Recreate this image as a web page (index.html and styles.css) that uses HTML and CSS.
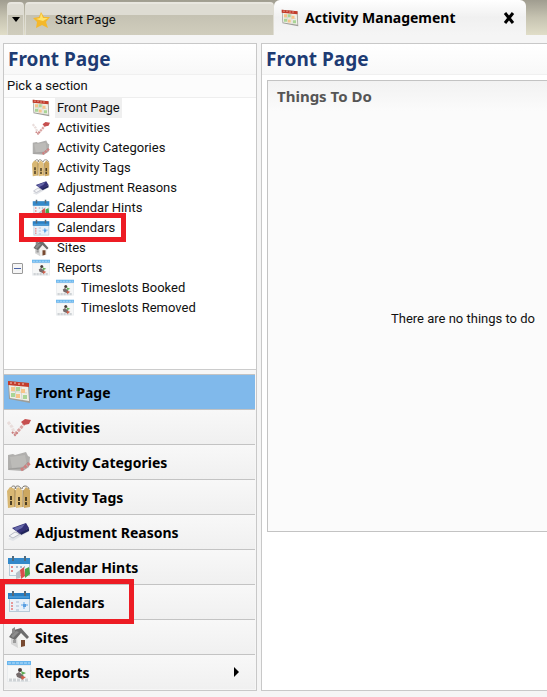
FILE: index.html
```html
<!DOCTYPE html>
<html lang="en">
<head>
    <meta charset="UTF-8">
    <meta name="viewport" content="width=device-width, initial-scale=1.0">
    <title>Activity Management</title>
    <link rel="stylesheet" href="styles.css">
</head>
<body>
    <!-- shared icons, used by the tree and the side menu -->
    <svg class="sprite" aria-hidden="true">
        <symbol id="front" viewBox="0 0 24 24">
            <path d="M1 1l21 2 1 20L2 19z" fill="#9d9d98"/>
            <path d="M2 5l19 1 1 15L3 18z" fill="#f0efe6"/>
            <path d="M1 1l21 2v4L1 5z" fill="#c33c2c"/>
            <path d="M4 2v2m4-2v2m4-1v2m4-2v2" stroke="#f2c9bd"/>
            <path d="M4 11l16 2M8 6l1 12m5-11l1 13" stroke="#d5d6d0"/>
            <path d="M4 7h4v4H4zm10 2h4v4h-4zm-5 5h4v4H9z" fill="#f7c489"/>
            <path d="M9 7h4v4H9zm-5 6h4v4H4zm12 2h4v4h-4z" fill="#a9d596"/>
        </symbol>
        <symbol id="activities" viewBox="0 0 24 24">
            <path d="M1 7l4 5 2 5" fill="none" stroke="#e9dddb" stroke-width="3" stroke-dasharray="3 1"/>
            <path d="M8 19l5-5 4-5" fill="none" stroke="#dba5a3" stroke-width="3" stroke-dasharray="3 1"/>
            <path d="M14 7l4-3 6 1-2 4-5 1z" fill="#c64f4f"/>
            <path d="M5 17l3 3 3-3" fill="none" stroke="#c98080" stroke-width="2" stroke-dasharray="2 1"/>
        </symbol>
        <symbol id="categories" viewBox="0 0 24 24">
            <path d="M1 5l5-1 2 1 11-3 2 4 2 1-1 10-6 4-15-1z" fill="#b0afad"/>
            <path d="M3 7l15-2 2 11-15 2z" fill="#bcbbb8"/>
            <path d="M2 19l14-1 5-6" fill="none" stroke="#9c9b99"/>
            <path d="M14 20l4-3 5-4" fill="none" stroke="#cf8080" stroke-width="3" stroke-dasharray="3 1"/>
        </symbol>
        <symbol id="tags" viewBox="0 0 24 24">
            <path d="M4 4c0-4 5-4 5 0m-1 0c0-4 5-4 6 0m1 0c0-4 6-4 7 0" fill="none" stroke="#777166"/>
            <path d="M0 6l3-4 5 2v18l-7 1z" fill="#d8b773"/>
            <path d="M8 6l3-4 4 3 1 17-7 1z" fill="#e1bf7b"/>
            <path d="M16 6l3-4 4 3v17l-6 1z" fill="#cda760"/>
            <path d="M8 5v17m8-17v17" stroke="#a08350"/>
            <path d="M4 11v9m8-8v8m7-8v8" stroke="#4b3e25" stroke-width="2" stroke-dasharray="4 1"/>
        </symbol>
        <symbol id="adjust" viewBox="0 0 24 24">
            <path d="M1 19l5 2 17-10-1-4z" fill="#e2e4e8"/>
            <path d="M2 16l6-4 5 2-7 4z" fill="#f4f4f6" stroke="#b9bcc6"/>
            <path d="M5 8l14-5 3 5-9 6z" fill="#343177"/>
            <path d="M7 8l11-4-3 4-6 3z" fill="#6668a9"/>
            <path d="M13 13l9-5v3l-8 4z" fill="#20245a"/>
        </symbol>
        <symbol id="calendar" viewBox="0 0 24 24">
            <path d="M2 3h21v19H2z" fill="#b8cbd8"/>
            <path d="M3 9h19v12H3z" fill="#e9f1f8"/>
            <path d="M1 3h22v6H1z" fill="#287fc4"/>
            <path d="M2 7h20" stroke="#62b0e7"/>
            <path d="M6 1v5m12-5v5" stroke="#576977" stroke-width="2"/>
            <path d="M5 12v8" stroke="#e79a9a" stroke-width="2" stroke-dasharray="2 1"/>
            <path d="M9 12h3m-3 4h3m-3 4h3" stroke="#c9d4e3" stroke-width="2"/>
            <path d="M17 12v7m-3-4h7" stroke="#a5cdf2" stroke-width="2"/>
            <path d="M16 14h3v3h-3z" fill="#5a9fe0"/>
        </symbol>
        <symbol id="hints" viewBox="0 0 24 24">
            <path d="M2 3h21v18H2z" fill="#b8cbd8"/>
            <path d="M3 9h19v11H3z" fill="#f0f5f8"/>
            <path d="M1 3h22v6H1z" fill="#3489ca"/>
            <path d="M6 1v5m12-5v5" stroke="#526b7d" stroke-width="2"/>
            <path d="M5 11v8" stroke="#e48b8b" stroke-width="2" stroke-dasharray="2 2"/>
            <path d="M9 12h9" stroke="#aabdd0" stroke-width="2" stroke-dasharray="2 2"/>
            <path d="M9 18l4-3v8l-4 1z" fill="#b7c0c8"/>
            <path d="M13 15l4-3 1 9-4 3z" fill="#d84d4b"/>
            <path d="M18 14l4-2 1 7-5 4z" fill="#49a648"/>
        </symbol>
        <symbol id="sites" viewBox="0 0 24 24">
            <path d="M4 11l6-5 9 7v8l-8 2-7-4z" fill="#d5d5d5"/>
            <path d="M10 13l4-5 6 5v8l-9 2z" fill="#f2f2f0"/>
            <path d="M2 12l5-7 7-2 8 9-2 2-6-6-6 7z" fill="#6c6c6c"/>
            <path d="M5 4l3-2v5l-3 2z" fill="#8a8a8a"/>
            <path d="M4 11l5-5 3 1-6 6z" fill="#8d8d8d"/>
            <path d="M14 15h4v6l-4 1z" fill="#784a31"/>
            <path d="M6 15h3v3H6z" fill="#9b9b9b"/>
        </symbol>
        <symbol id="reports" viewBox="0 0 24 24">
            <path d="M0 1h24v21H0z" fill="#e9ecee"/>
            <path d="M1 6h22v15H1z" fill="#f6f7f7"/>
            <path d="M0 1h24v4H0z" fill="#68b5ed"/>
            <path d="M1 3h22" stroke="#b9e0fb" stroke-dasharray="3 1"/>
            <path d="M2 20h20" stroke="#cfd3d6" stroke-width="3" stroke-dasharray="3 1"/>
            <circle cx="13" cy="10" r="2" fill="#4b3e3b"/>
            <path d="M9 14l3-2 5 4-2 3-5-2z" fill="#756b6b"/>
            <path d="M14 11l5 2-4 2z" fill="#60ad56"/>
            <path d="M14 16l5 1-4 3z" fill="#d35d48"/>
        </symbol>
        <symbol id="star" viewBox="0 0 18 18">
            <path d="M8 1l3 5 6 0-4 5 2 6-6-3-6 3 1-6-4-4 6-1z" fill="#f4b82c"/>
            <path d="M8 2l2 5 5 0-5 3-7-2 4-1z" fill="#ffe36b"/>
        </symbol>
    </svg>

    <header class="tabs">
        <button class="tab tab-list" aria-label="Tab list"><span class="arrow-down"></span></button>
        <button class="tab tab-start"><svg class="icon-small"><use href="#star"/></svg>Start Page</button>
        <div class="tab-active">
            <button class="tab-name"><svg class="icon-small"><use href="#front"/></svg>Activity Management</button>
            <button class="close" aria-label="Close tab">
                <svg viewBox="0 0 12 12"><path d="M2 1l8 10M10 1L2 11"/></svg>
            </button>
        </div>
    </header>

    <main class="workspace">
        <aside class="sidebar">
            <h1 class="title">Front Page</h1>
            <p class="subtitle">Pick a section</p>
            <ul class="tree">
                <li><a class="selected" href="#"><svg class="icon-small"><use href="#front"/></svg><span>Front Page</span></a></li>
                <li><a href="#"><svg class="icon-small"><use href="#activities"/></svg><span>Activities</span></a></li>
                <li><a href="#"><svg class="icon-small"><use href="#categories"/></svg><span>Activity Categories</span></a></li>
                <li><a href="#"><svg class="icon-small"><use href="#tags"/></svg><span>Activity Tags</span></a></li>
                <li><a href="#"><svg class="icon-small"><use href="#adjust"/></svg><span>Adjustment Reasons</span></a></li>
                <li><a href="#"><svg class="icon-small"><use href="#hints"/></svg><span>Calendar Hints</span></a></li>
                <li class="marked"><a href="#"><svg class="icon-small"><use href="#calendar"/></svg><span>Calendars</span></a></li>
                <li><a href="#"><svg class="icon-small"><use href="#sites"/></svg><span>Sites</span></a></li>
                <li class="parent">
                    <button class="expander" aria-label="Collapse Reports"></button>
                    <a href="#"><svg class="icon-small"><use href="#reports"/></svg><span>Reports</span></a>
                </li>
                <li class="child"><a href="#"><svg class="icon-small"><use href="#reports"/></svg><span>Timeslots Booked</span></a></li>
                <li class="child"><a href="#"><svg class="icon-small"><use href="#reports"/></svg><span>Timeslots Removed</span></a></li>
            </ul>
            <nav class="menu">
                <button class="active"><svg><use href="#front"/></svg>Front Page</button>
                <button><svg><use href="#activities"/></svg>Activities</button>
                <button><svg><use href="#categories"/></svg>Activity Categories</button>
                <button><svg><use href="#tags"/></svg>Activity Tags</button>
                <button><svg><use href="#adjust"/></svg>Adjustment Reasons</button>
                <button><svg><use href="#hints"/></svg>Calendar Hints</button>
                <button class="marked"><svg><use href="#calendar"/></svg>Calendars</button>
                <button><svg><use href="#sites"/></svg>Sites</button>
                <button><svg><use href="#reports"/></svg>Reports<span class="arrow-right"></span></button>
            </nav>
        </aside>

        <section class="content">
            <h2 class="title">Front Page</h2>
            <div class="todo">
                <h3>Things To Do</h3>
                <p>There are no things to do</p>
            </div>
        </section>
    </main>
</body>
</html>
```
FILE: styles.css
```css
*,
*::before,
*::after {
    box-sizing: border-box;
}

body {
    margin: 0;
    min-height: 100vh;
    display: flex;
    flex-direction: column;
    background: #f5f5f5;
    color: #111;
    font-family: Roboto, "Liberation Sans", sans-serif;
    font-size: 13px;
}

button {
    border: none;
    background: none;
    padding: 0;
    color: inherit;
    font: inherit;
    text-align: left;
}

h1, h2, h3, p, ul {
    margin: 0;
    padding: 0;
}

.sprite {
    position: absolute;
    width: 0;
    height: 0;
}

.icon-small {
    width: 18px;
    height: 18px;
    flex: none;
}

/* tabs */
.tabs {
    display: flex;
    height: 35px;
    padding-left: 7px;
    background: linear-gradient(#a09d90, #c6c3b1 50%, #e0ddc8);
}

.tab {
    display: flex;
    align-items: center;
    margin-top: 2px;
    border: 1px solid #dfddd3;
    border-top: 2px solid #e8e6df;
    border-bottom: none;
    border-radius: 4px 4px 0 0;
    background: linear-gradient(#dedcd3 35%, #c5c2b3 36%, #d0cdbd);
}

.tab-list {
    width: 17px;
    justify-content: center;
}

.arrow-down {
    border: 4px solid transparent;
    border-top: 5px solid #000;
    border-bottom: none;
}

.tab-start {
    flex: 0 1 249px;
    gap: 4px;
    margin-left: 1px;
    padding-left: 7px;
}

.tab-active {
    display: flex;
    flex: 0 1 252px;
    align-items: center;
    justify-content: space-between;
    padding: 0 11px 0 7px;
    border-radius: 6px 6px 0 0;
    background: linear-gradient(#fff, #f0f0f0 50%, #f5f5f5);
}

.tab-name {
    display: flex;
    align-items: center;
    gap: 6px;
    color: #000;
    font: bold 14px "Noto Sans", sans-serif;
    white-space: nowrap;
}

.close {
    display: flex;
}

.close svg {
    width: 12px;
    height: 12px;
    fill: none;
    stroke: #000;
    stroke-width: 3;
}

/* panels */
.workspace {
    display: flex;
    flex: 1;
    gap: 4px;
    padding: 8px 0 6px 3px;
}

.sidebar {
    display: flex;
    flex-direction: column;
    width: 254px;
    flex: none;
    border: 1px solid #c8c8c8;
    background: #fcfcfc;
}

.title {
    height: 31px;
    padding-left: 4px;
    border-bottom: 1px solid #f0f0f0;
    background: linear-gradient(#fff, #f8f8f8);
    color: #1e3b73;
    font: bold 19px/30px "Noto Sans", sans-serif;
}

.subtitle {
    padding-left: 3px;
    border-bottom: 1px solid #eee;
    line-height: 22px;
}

/* section tree */
.tree {
    flex: 1;
    background: #fff;
    list-style: none;
}

.tree li {
    position: relative;
    display: flex;
    height: 20px;
    padding-left: 28px;
}

.tree a {
    display: flex;
    align-items: center;
    gap: 5px;
    color: inherit;
    text-decoration: none;
}

.tree span {
    padding: 0 2px;
    line-height: 20px;
}

.tree .selected span {
    background: #efefef;
}

.tree .parent {
    align-items: center;
    gap: 9px;
    padding-left: 8px;
}

.tree .child {
    padding-left: 52px;
}

.expander {
    display: flex;
    align-items: center;
    width: 11px;
    height: 11px;
    border: 1px solid #9a9a9a;
    border-radius: 1px;
    background: #f5f5f5;
}

.expander::before {
    content: "";
    width: 7px;
    margin: 0 1px;
    border-top: 1px solid #4a63a8;
}

/* side menu */
.menu {
    display: flex;
    flex-direction: column;
    padding: 4px 1px 1px 0;
    border-top: 1px solid #ccc;
    background: #f6f6f6;
}

.menu button {
    position: relative;
    display: flex;
    align-items: center;
    gap: 4px;
    height: 35px;
    padding-left: 3px;
    border-top: 1px solid #c3c3c3;
    background: linear-gradient(#f8f8f8, #f0f0f0);
    color: #000;
    font: bold 14px "Noto Sans", sans-serif;
}

.menu svg {
    width: 24px;
    height: 24px;
}

.menu .active {
    background: #80b9eb;
}

.arrow-right {
    margin: 0 16px 0 auto;
    border: 5px solid transparent;
    border-left: 5px solid #000;
    border-right: none;
}

/* red frame around the calendar entries */
.marked::after {
    content: "";
    position: absolute;
    z-index: 1;
    border: 5px solid #ed1c24;
}

.tree .marked::after {
    top: -5px;
    left: 15px;
    width: 107px;
    height: 29px;
}

.menu .marked::after {
    top: -6px;
    left: -4px;
    width: 134px;
    height: 45px;
}

/* content */
.content {
    display: flex;
    flex: 1;
    flex-direction: column;
    min-width: 0;
    border: 1px solid #c8c8c8;
    border-right: none;
    background: #fff;
}

.todo {
    display: flex;
    flex-direction: column;
    height: 70%;
    margin: 5px 0 0 5px;
    border: 1px solid #c3c3c3;
    border-right: none;
    background: linear-gradient(#f2f2f2, #fbfbfb 30px);
}

.todo h3 {
    padding-left: 9px;
    color: #555;
    font: bold 15px/30px "Noto Sans", sans-serif;
}

.todo p {
    margin: auto 0;
    padding: 0 12px 5px 0;
    text-align: right;
}
```
